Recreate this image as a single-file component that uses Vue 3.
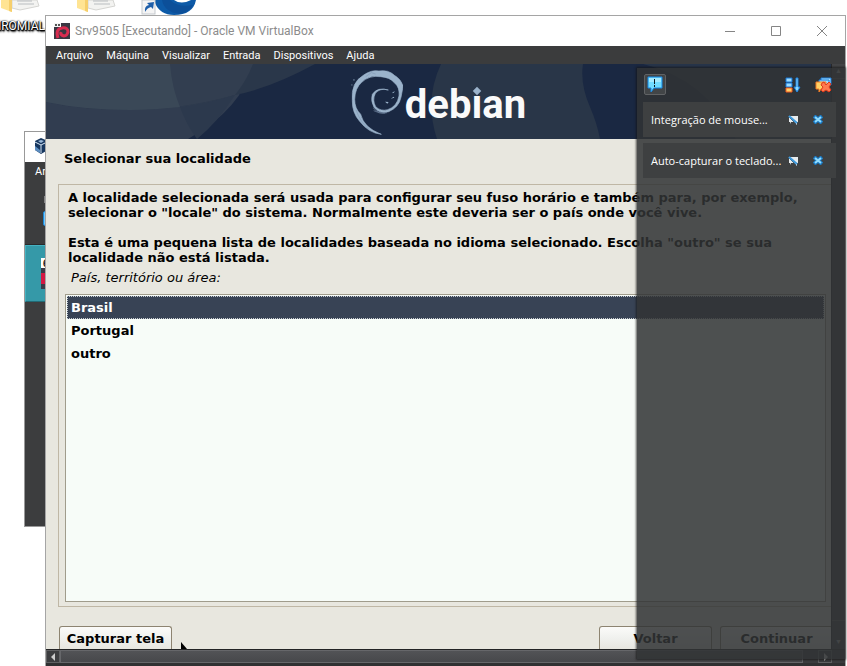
<script setup>
import { ref } from 'vue'

const menus = ['Arquivo', 'Máquina', 'Visualizar', 'Entrada', 'Dispositivos', 'Ajuda']
const places = ['Brasil', 'Portugal', 'outro']
const selected = ref('Brasil')
const notices = ref(['Integração de mouse...', 'Auto-capturar o teclado...'])

function dismiss(index) {
  notices.value.splice(index, 1)
}
</script>

<template>
  <div class="desktop">
    <div class="shortcuts">
      <svg width="200" height="16" viewBox="0 0 200 16" aria-hidden="true">
        <g id="folder">
          <path d="M12 0H37L39 6 20 10 12 8Z" fill="#f3f3f1" stroke="#d5d5d2" />
          <path d="M17 1H32M18 4H34" stroke="#b9bdc0" />
          <path d="M1 0H12V12L1 8Z" fill="#ffe493" />
          <path d="M9 0H12V12L9 11Z" fill="#f6cf6c" />
        </g>
        <use href="#folder" x="76" />
        <path d="M155 0H196Q193 15 174 15 160 15 155 3Z" fill="#0d5aa7" />
        <path d="M162 0Q164 12 180 14 190 12 193 5 178 8 170 0Z" fill="#0c4f99" />
        <path d="M174 0Q181 5 191 0Z" fill="#fff" />
        <rect x="142" y="0" width="13" height="14" fill="#f4f4f4" stroke="#c4c9ce" />
        <path d="M145 12Q144 6 149 5L147 3 154 2 153 9 151 7Q147 8 145 12Z" fill="#1d5ea9" />
      </svg>
      <span class="shortcut-name">HROMIAL</span>
    </div>

    <section class="manager" aria-label="VirtualBox">
      <div class="manager-title">
        <svg width="14" height="18" viewBox="0 0 14 18" aria-hidden="true">
          <path d="M7 1 14 4V13L7 17 1 13V4Z" fill="#17375f" />
          <path d="M7 8 13 5M7 8 1 5M7 8V16" stroke="#d9e8f6" stroke-width="1" />
          <path d="M4 4 7 3 10 4 7 6Z" fill="#9bbada" />
          <path d="M1 9 6 13V16L1 13Z" fill="#5c8dc0" />
        </svg>
      </div>
      <div class="manager-menu">Ar</div>
      <div class="manager-tools"><i class="tool-gray"></i><i class="tool-blue"></i></div>
      <div class="manager-machine"><i class="machine-icon">6</i></div>
    </section>

    <main class="window">
      <header class="titlebar">
        <svg class="app-icon" width="16" height="16" viewBox="0 0 16 16" aria-hidden="true">
          <rect width="16" height="16" fill="#3a3742" />
          <path d="M4 15Q1 6 8 5 14 4 14 9 13 13 10 13 6 12 7 9" fill="none" stroke="#d92c50" stroke-width="3" />
          <rect width="7" height="4" fill="#f4f4f4" />
          <path d="M1 2H3M4 2H6" stroke="#555" stroke-width="2" />
        </svg>
        <h1>Srv9505 [Executando] - Oracle VM VirtualBox</h1>
        <button type="button" aria-label="Minimizar">
          <svg width="12" height="12"><path d="M1 6.500H11" /></svg>
        </button>
        <button type="button" aria-label="Maximizar">
          <svg width="12" height="12"><path d="M1.500 1.500H10.500V10.500H1.500Z" /></svg>
        </button>
        <button type="button" aria-label="Fechar">
          <svg width="12" height="12"><path d="M1 1 11 11M11 1 1 11" /></svg>
        </button>
      </header>

      <nav class="menubar">
        <button v-for="menu in menus" :key="menu" type="button">{{ menu }}</button>
      </nav>

      <div class="stage">
        <div class="screen">
          <div class="banner">
            <svg class="banner-art" viewBox="0 0 785 75" preserveAspectRatio="xMinYMin slice" aria-hidden="true">
              <rect width="785" height="75" fill="#1a2842" />
              <path d="M0 0H207Q196 45 142 75H0Z" fill="#313d50" />
              <path d="M0 0H269Q225 24 189 31 134 46 84 46 38 46 0 38Z" fill="#2a374a" />
              <path d="M0 0H207Q201 16 189 31 134 46 84 46 38 46 0 38Z" fill="#323e50" />
              <path d="M0 0H124Q126 24 134 43 108 46 84 46 38 46 0 38Z" fill="#3a4857" />
              <path d="M134 43Q163 39 189 31 172 58 151 75 140 60 134 43Z" fill="#2c394d" />
              <path d="M395 0H537Q534 20 544 43 551 59 554 75H391Q378 36 395 0Z" fill="#293648" />
              <path d="M597 0H785V75H690Q660 15 597 0Z" fill="#27354a" />
            </svg>
            <div class="brand">
              <svg width="52" height="68" viewBox="66 26 156 204" aria-hidden="true">
                <g fill="#9bb3cb">
                  <path d="M157 222Q119 218 92 183 69 156 70 121 65 67 103 45 126 28 150 32 179 28 196 45 217 57 222 79L216 111Q210 141 179 154 151 162 135 141 124 122 130 102 145 79 178 89 153 82 139 99 129 120 140 139 155 154 176 148 204 139 210 107 213 81 196 67 183 51 155 49 120 44 98 66 78 83 77 117 77 145 95 162 104 202 157 222Z" stroke="#9bb3cb" stroke-width="2" />
                  <path d="M188 99 197 92 195 97ZM185 115 194 109 196 112ZM168 124 179 125 175 130ZM66 75 69 72 71 75ZM72 59 76 56 76 61ZM157 37 177 31 166 38ZM218 72 222 74 220 79Z" />
                </g>
                <path d="M132 142Q151 165 174 157M134 151Q149 160 168 158" fill="none" stroke="#7186a2" stroke-width="2" />
                <path d="M81 148Q94 187 121 207M110 49 127 37 140 41" fill="none" stroke="#829ab5" stroke-width="2" />
              </svg>
              <span class="wordmark">deb<span class="letter-i">ı</span>an</span>
            </div>
          </div>

          <h2>Selecionar sua localidade</h2>
          <section class="group">
            <p>A localidade selecionada será usada para configurar seu fuso horário e também para, por exemplo,<br>selecionar o "locale" do sistema. Normalmente este deveria ser o país onde você vive.</p>
            <p>Esta é uma pequena lista de localidades baseada no idioma selecionado. Escolha "outro" se sua<br>localidade não está listada.</p>
            <div id="area-label" class="area-label">País, território ou área:</div>
            <div class="list" role="radiogroup" aria-labelledby="area-label">
              <label v-for="place in places" :key="place" :class="{ active: selected === place }">
                <input v-model="selected" type="radio" name="area" :value="place">{{ place }}
              </label>
            </div>
          </section>
          <footer class="actions">
            <button type="button">Capturar tela</button>
            <svg class="pointer" width="8" height="8" viewBox="0 0 8 8" aria-hidden="true"><path d="M1 1V8H7Z" /></svg>
            <button type="button" class="back">Voltar</button>
            <button type="button">Continuar</button>
          </footer>
        </div>
        <div class="vscroll"><i>▲</i><span></span><i>▼</i></div>
      </div>
      <div class="hscroll">
        <svg width="14" height="13"><path d="M8 2V10L4 6Z" /></svg>
        <span></span>
        <svg width="14" height="13"><path d="M5 2V10L9 6Z" /></svg>
      </div>

      <aside class="notices" aria-label="Notificações">
        <div class="notice-tools">
          <button type="button" class="toggle" aria-label="Mostrar mensagens">
            <svg width="16" height="17" viewBox="0 0 16 17">
              <path d="M1 1H15V12H7L4 16V12H1Z" fill="#71dcff" stroke="#1688e4" />
              <path d="M2 2H14V6H2Z" fill="#a2eaff" />
              <path d="M7 3H8V8H7ZM7 9H8V11H7Z" fill="#0c1820" />
            </svg>
          </button>
          <button type="button" class="sort" aria-label="Ordenar">
            <svg width="16" height="16" viewBox="0 0 16 16">
              <path d="M1 1H7V5H1ZM1 6H7V10H1Z" fill="#9bdcff" stroke="#1574d4" />
              <path d="M1 11H7V15H1Z" fill="#ffd166" stroke="#f1591f" />
              <path d="M11 1H13V10H15L12 15 9 10H11Z" fill="#8cdcff" stroke="#1c80df" />
            </svg>
          </button>
          <button type="button" aria-label="Apagar tudo">
            <svg width="17" height="16" viewBox="0 0 17 16">
              <path d="M6 1H16V8H6Z" fill="#a3ddff" stroke="#1b7cda" />
              <path d="M4 3H14V9H4Z" fill="#a3ddff" stroke="#1b7cda" />
              <path d="M1 5H11V12H6L4 15V12H1Z" fill="#ffd166" stroke="#f57b23" />
              <path d="M7 6 9 5 11 8 14 5 16 7 14 10 16 13 14 15 11 13 8 15 6 13 8 10 6 8Z" fill="#ff794e" stroke="#df3a1c" />
            </svg>
          </button>
        </div>
        <div v-for="(notice, index) in notices" :key="notice" class="notice">
          <span>{{ notice }}</span>
          <button type="button" aria-label="Não mostrar novamente">
            <svg width="11" height="10" viewBox="0 0 11 10">
              <path d="M1 1H10V7H9V10L6 7H3L2 9V7H1Z" fill="#e8ecee" />
              <path d="M0 1 8 9" stroke="#4a545c" />
              <path d="M1 1 9 8" stroke="#3e9add" stroke-width="2" />
            </svg>
          </button>
          <button type="button" aria-label="Fechar notificação" @click="dismiss(index)">
            <svg width="10" height="9" viewBox="0 0 10 9">
              <path d="M1 1 9 8M9 1 1 8" stroke="#1c7cc6" stroke-width="4" />
              <path d="M2 2 8 7M8 2 2 7" stroke="#90dcff" stroke-width="2" />
            </svg>
          </button>
        </div>
      </aside>
    </main>
  </div>
</template>

<style>
body {
  margin: 0;
  background: #fff;
}
</style>

<style scoped>
* {
  box-sizing: border-box;
}
button {
  margin: 0;
  padding: 0;
  border: 0;
  background: none;
  color: inherit;
  font: inherit;
}
svg {
  display: block;
}
.desktop {
  position: relative;
  display: flex;
  min-height: 100vh;
  padding: 15px 1px 0 45px;
  overflow: hidden;
  font-family: "Open Sans", "Noto Sans", sans-serif;
}
.shortcuts {
  position: absolute;
  top: 0;
  left: 0;
}
.shortcut-name {
  position: absolute;
  top: 18px;
  left: 0;
  width: 45px;
  display: flex;
  justify-content: flex-end;
  color: #fff;
  font-family: Roboto, sans-serif;
  font-size: 12px;
  line-height: 16px;
  text-shadow: 0 1px 1px #000, 1px 1px 1px #000, -1px 0 1px #000, 0 0 2px #000, 1px 2px 2px #000;
}
.manager {
  position: absolute;
  top: 131px;
  left: 24px;
  width: 300px;
  height: 396px;
  border: 1px solid #999;
  background: #3c3d3e;
}
.manager-title {
  height: 30px;
  padding: 5px 9px;
  background: #fff;
}
.manager-menu {
  height: 20px;
  padding-left: 10px;
  color: #fff;
  font-family: Roboto, sans-serif;
  font-size: 11px;
  line-height: 20px;
}
.manager-tools {
  display: flex;
  flex-direction: column;
  gap: 8px;
  height: 63px;
  padding: 14px 0 0 18px;
  border-bottom: 1px solid #292a2b;
}
.tool-gray {
  width: 20px;
  height: 7px;
  margin-left: 1px;
  background: #858585;
}
.tool-blue {
  width: 20px;
  height: 15px;
  border: 1px solid #1c89d9;
  border-radius: 2px;
  background: #73caff;
}
.manager-machine {
  height: 57px;
  padding: 12px 15px;
  border: 1px solid #45b2c1;
  border-bottom-color: #226b76;
  background: #3599a8;
}
.machine-icon {
  display: block;
  width: 30px;
  height: 31px;
  padding-left: 2px;
  background: linear-gradient(#fff 10px, #3b3b48 10px 15px, #d31843 15px 26px, #3b3b48 26px);
  color: #222;
  font-size: 10px;
  font-style: normal;
  font-weight: 700;
  line-height: 10px;
}
.window {
  position: relative;
  z-index: 1;
  display: flex;
  flex: 1;
  flex-direction: column;
  min-width: 0;
  border: 1px solid #a5a5a5;
  border-bottom: 0;
  background: #3a3b3c;
}
.titlebar {
  display: flex;
  align-items: center;
  height: 30px;
  padding-left: 8px;
  background: #fff;
}
.titlebar h1 {
  flex: 1;
  margin: 0 0 0 5px;
  color: #8c8c8c;
  font-family: Roboto, sans-serif;
  font-size: 12px;
  font-weight: 400;
  line-height: 16px;
}
.titlebar button {
  display: grid;
  place-items: center;
  width: 46px;
  height: 28px;
}
.titlebar button path {
  fill: none;
  stroke: #858585;
}
.menubar {
  display: flex;
  gap: 13px;
  height: 18px;
  padding-left: 10px;
  background: #3b3c3d;
  color: #fff;
  font-family: Roboto, sans-serif;
  font-size: 11px;
  line-height: 20px;
}
.stage {
  display: flex;
  flex: 1;
  min-height: 0;
}
.screen {
  display: flex;
  flex: 1;
  flex-direction: column;
  min-width: 0;
  overflow: hidden;
  background: #e8e7df;
  color: #000;
  font: bold 13px/15px "DejaVu Sans", sans-serif;
}
.banner {
  position: relative;
  display: flex;
  justify-content: center;
  height: 75px;
  overflow: hidden;
}
.banner-art {
  position: absolute;
  width: 100%;
  height: 100%;
}
.brand {
  position: relative;
  display: flex;
  gap: 2px;
  padding-top: 5px;
}
.wordmark {
  color: #fafafa;
  font: bold 40px/72px Roboto, sans-serif;
}
.letter-i {
  position: relative;
}
.letter-i::before {
  position: absolute;
  top: 7px;
  left: 3px;
  width: 6px;
  height: 6px;
  background: #9bb3cb;
  content: "";
  transform: rotate(45deg);
}
.screen h2 {
  margin: 12px 18px 18px;
  font-size: 13px;
  line-height: 15px;
}
.group {
  display: flex;
  flex: 1;
  flex-direction: column;
  margin: 0 -2px 0 12px;
  padding: 5px 6px 4px;
  border: 1px solid #bfb7a5;
}
.group p {
  margin: 0 0 15px 3px;
  white-space: nowrap;
}
.group p + p {
  margin-bottom: 5px;
}
.area-label {
  margin: 0 6px 9px;
  font-style: italic;
  font-weight: 400;
}
.list {
  flex: 1;
  padding: 1px;
  border: 1px solid #a09c8c;
  background: #f7fcf8;
}
.list label {
  display: block;
  height: 23px;
  padding: 3px;
  border: 1px solid transparent;
}
.list label.active {
  border: 1px dotted #c6cbd0;
  background: #384355;
  color: #fff;
}
.list input {
  position: absolute;
  opacity: 0;
  pointer-events: none;
}
.actions {
  display: flex;
  gap: 8px;
  align-items: end;
  height: 42px;
  margin: 0 -2px 0 13px;
}
.actions button {
  width: 113px;
  height: 23px;
  border: 1px solid #8d8471;
  border-bottom: 0;
  border-radius: 3px 3px 0 0;
  background: linear-gradient(#fbfbf9, #f0f1ee 50%, #e7e6df);
}
.actions .back {
  margin-left: auto;
}
.vscroll {
  display: flex;
  flex-direction: column;
  width: 14px;
  border-left: 1px solid #29292b;
  background: #444547;
}
.vscroll i {
  height: 14px;
  color: #aaa;
  font-size: 7px;
  font-style: normal;
  line-height: 13px;
  text-align: center;
}
.vscroll span {
  flex: 1;
  margin-bottom: 14px;
  border: solid #5a5b5d;
  border-width: 1px 0;
  background: #444548;
}
.hscroll {
  display: flex;
  align-items: center;
  height: 17px;
  padding-right: 13px;
  border-top: 1px solid #232425;
  border-bottom: 3px solid #303132;
  background: #3c3d3f;
}
.hscroll svg {
  border: 1px solid #606163;
  fill: #ccc;
}
.hscroll span {
  flex: 1;
  height: 13px;
  margin-right: 15px;
  border: 1px solid #66676a;
  background: linear-gradient(#525356, #47484b);
}
.notices {
  position: absolute;
  top: 52px;
  right: 0;
  bottom: 7px;
  width: 208px;
  padding: 6px 9px 0 6px;
  background: rgba(49, 51, 52, 0.86);
  box-shadow: 0 0 2px 1px rgba(20, 20, 20, 0.7);
  color: #fff;
  font-size: 11px;
}
.notice-tools {
  display: flex;
  gap: 14px;
  align-items: center;
  height: 21px;
  margin: 0 4px 7px 1px;
}
.toggle {
  display: grid;
  place-items: center;
  width: 22px;
  height: 21px;
  border: 1px solid #606264;
  border-radius: 2px;
  background: #424547;
}
.sort {
  margin-left: auto;
}
.notice {
  display: flex;
  align-items: center;
  height: 35px;
  margin-bottom: 6px;
  padding: 0 13px 0 8px;
  background: #3e4041;
}
.notice span {
  flex: 1;
  white-space: nowrap;
}
.notice button + button {
  margin-left: 14px;
}
</style>
